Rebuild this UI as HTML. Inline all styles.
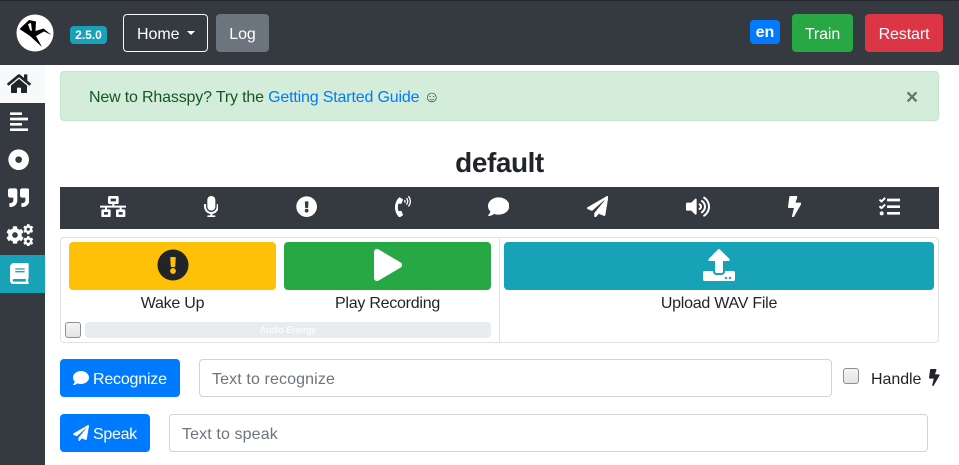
<!DOCTYPE html>
<html><head><meta charset="utf-8"><title>Rhasspy</title>
<style>
html,body{margin:0;padding:0;width:959px;height:465px;overflow:hidden;background:#fff;font-family:"Liberation Sans",sans-serif;font-size:16px;color:#212529}
.a{position:absolute;box-sizing:border-box;white-space:nowrap}
.b{border-radius:4px;color:#fff;text-align:center;line-height:41px;height:38px;top:14px;letter-spacing:-.1px}
svg{position:absolute;display:block;fill:currentColor}
.inp{border:1px solid #ced4da;border-radius:4px;height:38px;line-height:39px;padding-left:12px;color:#6c757d;background:#fff;letter-spacing:.12px}
.cb{width:16px;height:16px;border:1px solid #8f8f8f;border-radius:3px;background:linear-gradient(#f4f4f4,#e4e4e4)}
.lbl{text-align:center;top:294px;height:20px;line-height:20px;letter-spacing:-.25px}
</style></head><body>
<svg width="0" height="0" style="position:absolute"><defs>
<path id="exc" d="M504 256c0 136.997-111.043 248-248 248S8 392.997 8 256C8 119.083 119.043 8 256 8s248 111.083 248 248zm-248 50c-25.405 0-46 20.595-46 46s20.595 46 46 46 46-20.595 46-46-20.595-46-46-46zm-43.673-165.346l7.418 136c.347 6.364 5.609 11.346 11.982 11.346h48.546c6.373 0 11.635-4.982 11.982-11.346l7.418-136c.375-6.874-5.098-12.654-11.982-12.654h-63.383c-6.884 0-12.356 5.78-11.981 12.654z"/>
<path id="bolt" d="M296 160H180.6l42.6-129.8C227.2 15 215.7 0 200 0H56C44 0 33.8 8.9 32.2 20.8l-32 240C-1.7 275.2 9.5 288 24 288h118.7L96.6 482.5c-3.6 15.2 8 29.5 23.3 29.5 8.4 0 16.4-4.4 20.8-12l176-304c9.3-15.9-2.2-36-20.7-36z"/>
<path id="plane" d="M476 3.2L12.5 270.6c-18.1 10.4-15.8 35.6 2.2 43.2L121 358.4l287.3-253.2c5.5-4.9 13.3 2.6 8.6 8.3L176 407v80.5c0 23.6 28.5 32.9 42.5 15.8L282 426l124.6 52.2c14.2 6 30.4-2.9 33-18.2l72-432C515 7.8 493.3-6.8 476 3.2z"/>
<path id="comment" d="M256 32C114.6 32 0 125.1 0 240c0 49.6 21.4 95 57 130.7C44.5 421.1 2.7 466 2.2 466.5c-2.2 2.3-2.8 5.7-1.5 8.7S4.8 480 8 480c66.3 0 116-31.8 140.6-51.4 32.7 12.3 69 19.4 107.4 19.4 141.4 0 256-93.1 256-208S397.4 32 256 32z"/>
<path id="cog" d="M487.4 315.7l-42.6-24.6c4.3-23.2 4.3-47 0-70.2l42.6-24.6c4.9-2.8 7.1-8.6 5.5-14-11.1-35.6-30-67.8-54.7-94.6-3.8-4.1-10-5.1-14.8-2.3L380.8 110c-17.9-15.4-38.5-27.3-60.8-35.1V25.8c0-5.6-3.9-10.5-9.4-11.7-36.7-8.2-74.3-7.8-109.2 0-5.5 1.2-9.4 6.1-9.4 11.7V75c-22.2 7.9-42.8 19.8-60.8 35.1L88.7 85.5c-4.9-2.8-11-1.9-14.8 2.3-24.7 26.7-43.6 58.9-54.7 94.6-1.7 5.4.6 11.2 5.5 14L67.3 221c-4.3 23.2-4.3 47 0 70.2l-42.6 24.6c-4.9 2.8-7.1 8.6-5.5 14 11.1 35.6 30 67.8 54.7 94.6 3.8 4.1 10 5.1 14.8 2.3l42.6-24.6c17.9 15.4 38.5 27.3 60.8 35.1v49.2c0 5.6 3.9 10.5 9.4 11.7 36.7 8.2 74.3 7.8 109.2 0 5.5-1.2 9.4-6.1 9.4-11.7v-49.2c22.2-7.9 42.8-19.8 60.8-35.1l42.6 24.6c4.9 2.8 11 1.9 14.8-2.3 24.7-26.7 43.6-58.9 54.7-94.6 1.5-5.5-.7-11.3-5.6-14.1zM256 336c-44.1 0-80-35.9-80-80s35.9-80 80-80 80 35.9 80 80-35.9 80-80 80z"/>
</defs></svg>

<!-- navbar -->
<div class="a" style="left:0;top:0;width:959px;height:65px;background:#343a40;border-top:1px solid #23272b"></div>
<svg style="left:16px;top:14px" width="38" height="38" viewBox="16 14 38 38"><circle cx="35" cy="33" r="18.5" fill="#fff"/><path fill="#000" d="M19.5 29L29 20L36 21.5L35.5 31L43.5 28.5L51.5 35L44 31.5L36 36L42 47L30 36Z"/><path fill="#fff" d="M28 24l3-1 1 8-2-1z"/></svg>
<div class="a" style="left:70px;top:26px;width:37px;height:18px;background:#17a2b8;border-radius:4px;color:#fff;font-weight:bold;font-size:12px;line-height:18px;text-align:center">2.5.0</div>
<div class="a b" style="left:123px;width:85px;border:1px solid #f8f9fa;line-height:39px;text-align:left;padding-left:13px;letter-spacing:-.05px">Home</div>
<div class="a" style="left:187px;top:31px;width:0;height:0;border-left:4px solid transparent;border-right:4px solid transparent;border-top:4px solid #fff"></div>
<div class="a b" style="left:216px;width:53px;background:#6c757d">Log</div>
<div class="a" style="left:750px;top:20px;width:30px;height:24px;background:#007bff;border-radius:4px;color:#fff;font-weight:bold;font-size:16px;line-height:25px;text-align:center">en</div>
<div class="a b" style="left:792px;width:61px;background:#28a745">Train</div>
<div class="a b" style="left:865px;width:78px;background:#dc3545">Restart</div>

<!-- sidebar -->
<div class="a" style="left:0;top:65px;width:45px;height:400px;background:#343a40"></div>
<div class="a" style="left:0;top:65px;width:45px;height:38px;background:#f8f9fa"></div>
<div class="a" style="left:0;top:255px;width:45px;height:38px;background:#17a2b8"></div>
<svg style="left:7px;top:72.5px;color:#212529" width="24" height="21.33" viewBox="0 0 576 512"><path d="M280.37 148.26L96 300.11V464a16 16 0 0 0 16 16l112.06-.29a16 16 0 0 0 15.92-16V368a16 16 0 0 1 16-16h64a16 16 0 0 1 16 16v95.64a16 16 0 0 0 16 16.05L464 480a16 16 0 0 0 16-16V300L295.67 148.26a12.19 12.19 0 0 0-15.3 0zM571.6 251.47L488 182.56V44.05a12 12 0 0 0-12-12h-56a12 12 0 0 0-12 12v72.61L318.47 43a48 48 0 0 0-61 0L4.34 251.47a12 12 0 0 0-1.6 16.9l25.5 31A12 12 0 0 0 45.15 301l235.22-193.74a12.19 12.19 0 0 1 15.3 0L530.9 301a12 12 0 0 0 16.9-1.6l25.5-31a12 12 0 0 0-1.7-16.93z"/></svg>
<svg style="left:9.67px;top:110.5px;color:#fff" width="18.67" height="21.33" viewBox="0 0 448 512"><path d="M12.83 352h262.34A12.82 12.82 0 0 0 288 339.17v-38.34A12.82 12.82 0 0 0 275.17 288H12.83A12.82 12.82 0 0 0 0 300.83v38.34A12.82 12.82 0 0 0 12.83 352zm0-256h262.34A12.82 12.82 0 0 0 288 83.17V44.83A12.82 12.82 0 0 0 275.17 32H12.83A12.82 12.82 0 0 0 0 44.83v38.34A12.82 12.82 0 0 0 12.83 96zM432 160H16a16 16 0 0 0-16 16v32a16 16 0 0 0 16 16h416a16 16 0 0 0 16-16v-32a16 16 0 0 0-16-16zm0 256H16a16 16 0 0 0-16 16v32a16 16 0 0 0 16 16h416a16 16 0 0 0 16-16v-32a16 16 0 0 0-16-16z"/></svg>
<svg style="left:8px;top:148.5px;color:#fff" width="21.33" height="21.33" viewBox="0 0 512 512"><path fill-rule="evenodd" d="M256 8a248 248 0 1 0 0 496 248 248 0 0 0 0-496zm0 168a80 80 0 1 1 0 160 80 80 0 0 1 0-160z"/></svg>
<svg style="left:8px;top:186.5px;color:#fff" width="21.33" height="21.33" viewBox="0 0 512 512"><path d="M464 32H336c-26.5 0-48 21.5-48 48v128c0 26.5 21.5 48 48 48h80v64c0 35.3-28.7 64-64 64h-8c-13.3 0-24 10.7-24 24v48c0 13.3 10.7 24 24 24h8c88.4 0 160-71.6 160-160V80c0-26.5-21.5-48-48-48zm-288 0H48C21.5 32 0 53.5 0 80v128c0 26.5 21.5 48 48 48h80v64c0 35.3-28.7 64-64 64h-8c-13.3 0-24 10.7-24 24v48c0 13.3 10.7 24 24 24h8c88.4 0 160-71.6 160-160V80c0-26.5-21.5-48-48-48z"/></svg>
<svg style="left:6px;top:226px;color:#fff" width="18" height="18" viewBox="0 0 512 512"><use href="#cog"/></svg>
<svg style="left:23px;top:224px;color:#fff" width="10.5" height="10.5" viewBox="0 0 512 512"><use href="#cog"/></svg>
<svg style="left:23px;top:235.5px;color:#fff" width="10.5" height="10.5" viewBox="0 0 512 512"><use href="#cog"/></svg>
<svg style="left:10px;top:263px;color:#fff" width="18.67" height="21.33" viewBox="0 0 448 512"><path d="M448 360V24c0-13.3-10.7-24-24-24H96C43 0 0 43 0 96v320c0 53 43 96 96 96h328c13.3 0 24-10.7 24-24v-16c0-7.5-3.5-14.3-8.9-18.7-4.2-15.4-4.2-59.3 0-74.7 5.4-4.3 8.9-11.1 8.9-18.6zM128 134c0-3.3 2.7-6 6-6h212c3.3 0 6 2.7 6 6v20c0 3.3-2.7 6-6 6H134c-3.3 0-6-2.7-6-6v-20zm0 64c0-3.3 2.7-6 6-6h212c3.3 0 6 2.7 6 6v20c0 3.3-2.7 6-6 6H134c-3.3 0-6-2.7-6-6v-20zm253.4 250H96c-17.7 0-32-14.3-32-32 0-17.6 14.4-32 32-32h285.4c-1.9 17.1-1.9 46.9 0 64z"/></svg>

<!-- alert -->
<div class="a" style="left:60px;top:71px;width:879px;height:50px;background:#d4edda;border:1px solid #c3e6cb;border-radius:4px"></div>
<div class="a" style="left:89px;top:88px;height:20px;line-height:20px;color:#155724;letter-spacing:-.17px">New to Rhasspy? Try the <span style="color:#007bff">Getting Started Guide</span> ☺</div>
<div class="a" style="left:900px;top:84px;width:24px;height:28px;line-height:28px;text-align:center;font-weight:bold;font-size:21px;color:#6b7570">×</div>

<!-- heading -->
<div class="a" style="left:60px;top:146px;width:879px;height:34px;line-height:34px;text-align:center;font-size:28px;font-weight:bold;color:#212529;letter-spacing:-.45px">default</div>

<!-- tabs -->
<div class="a" style="left:60px;top:187px;width:879px;height:42px;background:#343a40"></div>
<svg style="left:99.5px;top:196px;color:#fff" width="26.67" height="21.33" viewBox="0 0 640 512"><path d="M640 264v-16c0-8.84-7.16-16-16-16H344v-40h72c17.67 0 32-14.33 32-32V32c0-17.67-14.33-32-32-32H224c-17.67 0-32 14.33-32 32v128c0 17.67 14.33 32 32 32h72v40H16c-8.84 0-16 7.16-16 16v16c0 8.84 7.16 16 16 16h104v40H64c-17.67 0-32 14.33-32 32v128c0 17.67 14.33 32 32 32h160c17.67 0 32-14.33 32-32V352c0-17.67-14.33-32-32-32h-56v-40h304v40h-56c-17.67 0-32 14.33-32 32v128c0 17.67 14.33 32 32 32h160c17.67 0 32-14.33 32-32V352c0-17.67-14.33-32-32-32h-56v-40h104c8.84 0 16-7.16 16-16zM256 128V64h128v64H256zm-64 320H96v-64h96v64zm352 0h-96v-64h96v64z"/></svg>
<svg style="left:203.7px;top:196px;color:#fff" width="14.67" height="21.33" viewBox="0 0 352 512"><path d="M176 352c53.02 0 96-42.98 96-96V96c0-53.02-42.98-96-96-96S80 42.98 80 96v160c0 53.02 42.98 96 96 96zm160-160h-16c-8.84 0-16 7.16-16 16v48c0 74.8-64.49 134.82-140.79 127.38C96.71 376.89 48 317.11 48 250.3V208c0-8.84-7.16-16-16-16H16c-8.84 0-16 7.16-16 16v40.16c0 89.64 63.97 169.55 152 181.69V464H96c-8.84 0-16 7.16-16 16v16c0 8.84 7.16 16 16 16h160c8.84 0 16-7.16 16-16v-16c0-8.84-7.16-16-16-16h-56v-33.77C285.71 418.47 352 344.9 352 256v-48c0-8.84-7.16-16-16-16z"/></svg>
<svg style="left:295.8px;top:196px;color:#fff" width="21.33" height="21.33" viewBox="0 0 512 512"><use href="#exc"/></svg>
<svg style="left:395px;top:196px;color:#fff" width="16" height="21.33" viewBox="0 0 384 512"><path d="M97.333 506.966c-129.874-129.874-129.681-340.252 0-469.933 5.698-5.698 14.527-6.632 21.263-2.422l64.817 40.513a17.187 17.187 0 0 1 6.849 20.966l-32.408 81.021a17.188 17.188 0 0 1-17.669 10.685l-55.81-5.58c-21.051 58.261-20.612 122.471 0 179.515l55.811-5.581a17.188 17.188 0 0 1 17.669 10.685l32.408 81.022a17.188 17.188 0 0 1-6.849 20.965l-64.817 40.513a17.19 17.19 0 0 1-21.264-2.369zM247.126 95.473c11.832 20.047 11.832 45.008 0 65.055-3.95 6.693-13.108 7.959-18.718 2.581l-5.975-5.726c-3.911-3.748-4.793-9.622-2.261-14.41a32.063 32.063 0 0 0 0-29.945c-2.533-4.788-1.65-10.662 2.261-14.41l5.975-5.726c5.61-5.378 14.768-4.112 18.718 2.581zm91.787-91.187c60.14 71.604 60.092 175.882 0 247.428-4.474 5.327-12.53 5.746-17.552.933l-5.798-5.557c-4.56-4.371-4.977-11.529-.93-16.379 49.687-59.538 49.646-145.933 0-205.422-4.047-4.85-3.631-12.008.93-16.379l5.798-5.557c5.022-4.813 13.078-4.394 17.552.933zm-45.972 44.941c36.05 46.322 36.108 111.149 0 157.546-4.39 5.641-12.697 6.251-17.856 1.304l-5.818-5.579c-4.4-4.219-4.998-11.095-1.285-15.931 26.536-34.564 26.534-82.572 0-117.134-3.713-4.836-3.115-11.711 1.285-15.931l5.818-5.579c5.159-4.947 13.466-4.337 17.856 1.304z"/></svg>
<svg style="left:488px;top:196px;color:#fff" width="21.33" height="21.33" viewBox="0 0 512 512"><use href="#comment"/></svg>
<svg style="left:587px;top:196px;color:#fff" width="21.33" height="21.33" viewBox="0 0 512 512"><use href="#plane"/></svg>
<svg style="left:686px;top:196px;color:#fff" width="24" height="21.33" viewBox="0 0 576 512"><path d="M215.03 71.05L126.06 160H24c-13.26 0-24 10.74-24 24v144c0 13.25 10.74 24 24 24h102.06l88.97 88.95c15.03 15.03 40.97 4.47 40.97-16.97V88.02c0-21.46-25.96-31.98-40.97-16.97zm233.32-51.08c-11.17-7.33-26.18-4.24-33.51 6.95-7.34 11.17-4.22 26.18 6.95 33.51 66.27 43.49 105.82 116.6 105.82 195.58 0 78.98-39.55 152.09-105.82 195.58-11.17 7.32-14.29 22.34-6.95 33.5 7.04 10.71 21.93 14.56 33.51 6.95C528.27 439.58 576 351.33 576 256S528.27 72.43 448.35 19.97zM480 256c0-63.53-32.06-121.94-85.77-156.24-11.19-7.14-26.03-3.82-33.12 7.46s-3.78 26.21 7.41 33.36C408.27 165.97 432 209.11 432 256s-23.73 90.03-63.48 115.42c-11.19 7.14-14.5 22.07-7.41 33.36 6.51 10.36 21.12 15.14 33.12 7.46C447.94 377.94 480 319.54 480 256zm-141.77-76.87c-11.58-6.33-26.19-2.16-32.61 9.45-6.39 11.61-2.16 26.2 9.45 32.61C327.98 228.28 336 241.63 336 256c0 14.38-8.02 27.72-20.92 34.81-11.61 6.41-15.84 21-9.45 32.61 6.43 11.66 21.05 15.8 32.61 9.45 28.23-15.55 45.77-45 45.77-76.88s-17.54-61.32-45.78-76.86z"/></svg>
<svg style="left:787.8px;top:196px;color:#fff" width="13.33" height="21.33" viewBox="0 0 320 512"><use href="#bolt"/></svg>
<svg style="left:879px;top:196px;color:#fff" width="21.33" height="21.33" viewBox="0 0 512 512"><path d="M139.61 35.5a12 12 0 0 0-17 0L58.93 98.81l-22.7-22.12a12 12 0 0 0-17 0L3.53 92.41a12 12 0 0 0 0 17l47.59 47.4a12.78 12.78 0 0 0 17.61 0l15.59-15.62L156.52 69a12.09 12.09 0 0 0 .09-17zm0 159.19a12 12 0 0 0-17 0l-63.68 63.72-22.7-22.1a12 12 0 0 0-17 0L3.53 252a12 12 0 0 0 0 17L51 316.5a12.77 12.77 0 0 0 17.6 0l15.7-15.69 72.2-72.22a12 12 0 0 0 .09-16.9zM64 368c-26.49 0-48.59 21.5-48.59 48S37.53 464 64 464a48 48 0 0 0 0-96zm432 16H208a16 16 0 0 0-16 16v32a16 16 0 0 0 16 16h288a16 16 0 0 0 16-16v-32a16 16 0 0 0-16-16zm0-320H208a16 16 0 0 0-16 16v32a16 16 0 0 0 16 16h288a16 16 0 0 0 16-16V80a16 16 0 0 0-16-16zm0 160H208a16 16 0 0 0-16 16v32a16 16 0 0 0 16 16h288a16 16 0 0 0 16-16v-32a16 16 0 0 0-16-16z"/></svg>

<!-- panel -->
<div class="a" style="left:60px;top:237px;width:879px;height:106px;border:1px solid #dee2e6;border-radius:4px"></div>
<div class="a" style="left:499px;top:237px;width:1px;height:106px;background:#dee2e6"></div>
<div class="a" style="left:69px;top:242px;width:207px;height:48px;background:#ffc107;border-radius:4px"></div>
<div class="a" style="left:284px;top:242px;width:207px;height:48px;background:#28a745;border-radius:4px"></div>
<div class="a" style="left:504px;top:242px;width:430px;height:48px;background:#17a2b8;border-radius:4px"></div>
<svg style="left:156.5px;top:248.5px;color:#212529" width="32" height="32" viewBox="0 0 512 512"><use href="#exc"/></svg>
<svg style="left:373.5px;top:248.5px;color:#fff" width="28" height="32" viewBox="0 0 448 512"><path d="M424.4 214.7L72.4 6.6C43.8-10.3 0 6.1 0 47.9V464c0 37.5 40.7 60.1 72.4 41.3l352-208c31.4-18.5 31.5-64.1 0-82.6z"/></svg>
<svg style="left:703px;top:248.5px;color:#fff" width="32" height="32" viewBox="0 0 512 512"><path d="M296 384h-80c-13.3 0-24-10.7-24-24V192h-87.7c-17.8 0-26.7-21.5-14.1-34.1L242.3 5.7c7.5-7.5 19.8-7.5 27.3 0l152.2 152.2c12.6 12.6 3.7 34.1-14.1 34.1H320v168c0 13.3-10.7 24-24 24zm216-8v112c0 13.3-10.7 24-24 24H24c-13.3 0-24-10.7-24-24V376c0-13.3 10.7-24 24-24h136v8c0 30.9 25.1 56 56 56h80c30.9 0 56-25.1 56-56v-8h136c13.3 0 24 10.7 24 24zm-124 88c0-11-9-20-20-20s-20 9-20 20 9 20 20 20 20-9 20-20zm64 0c0-11-9-20-20-20s-20 9-20 20 9 20 20 20 20-9 20-20z"/></svg>
<div class="a lbl" style="left:69px;width:207px">Wake Up</div>
<div class="a lbl" style="left:284px;width:207px">Play Recording</div>
<div class="a lbl" style="left:504px;width:430px">Upload WAV File</div>
<div class="a cb" style="left:65px;top:322px"></div>
<div class="a" style="left:85px;top:322px;width:406px;height:16px;background:#e9ecef;border-radius:4px;color:#fff;font-size:9.3px;line-height:16px;text-align:center">Audio Energy</div>

<!-- recognize -->
<div class="a" style="left:60px;top:359px;width:120px;height:38px;background:#007bff;border-radius:4px;color:#fff;line-height:41px;padding-left:33px;letter-spacing:-.2px">Recognize</div>
<svg style="left:73px;top:370px;color:#fff" width="16" height="16" viewBox="0 0 512 512"><use href="#comment"/></svg>
<div class="a inp" style="left:199px;top:359px;width:633px">Text to recognize</div>
<div class="a cb" style="left:843px;top:368px"></div>
<div class="a" style="left:871px;top:370px;height:20px;line-height:20px;letter-spacing:-.05px">Handle</div>
<svg style="left:929px;top:369px;color:#212529" width="10.67" height="17" viewBox="0 0 320 512"><use href="#bolt"/></svg>

<!-- speak -->
<div class="a" style="left:60px;top:414px;width:90px;height:38px;background:#007bff;border-radius:4px;color:#fff;line-height:41px;padding-left:33px;letter-spacing:-.3px">Speak</div>
<svg style="left:73px;top:425px;color:#fff" width="16" height="16" viewBox="0 0 512 512"><use href="#plane"/></svg>
<div class="a inp" style="left:169px;top:414px;width:759px">Text to speak</div>
</body></html>
